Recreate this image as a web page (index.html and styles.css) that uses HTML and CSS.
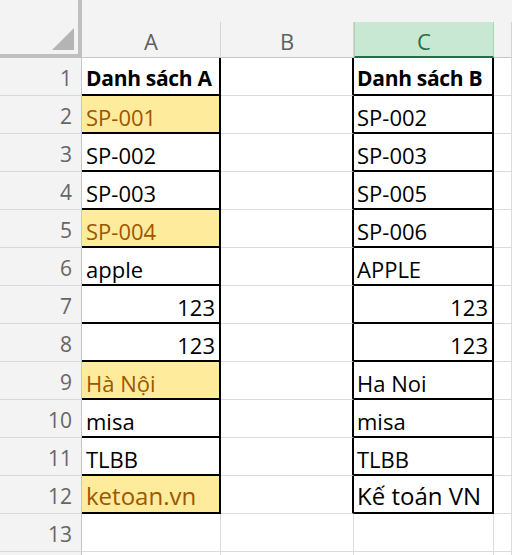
FILE: index.html
```html
<!DOCTYPE html>
<html lang="vi">
<head>
<meta charset="utf-8">
<title>Sheet</title>
<link rel="stylesheet" href="styles.css">
</head>
<body>
<div class="sheet">
  <div class="corner">
    <svg width="82" height="58" viewBox="0 0 82 58">
      <rect x="0" y="0" width="82" height="58" fill="#f3f3f3"/>
      <rect x="78" y="0" width="4" height="58" fill="#bfbfbf"/>
      <rect x="0" y="54" width="82" height="4" fill="#bfbfbf"/>
      <polygon points="52,50 74,28 74,50" fill="#b4b4b4"/>
    </svg>
  </div>
  <div class="strip"></div>
  <div class="ch">A</div>
  <div class="ch">B</div>
  <div class="ch ch-sel">C</div>
  <div class="ch"></div>

  <div class="rh">1</div>
  <div class="c ca bold">Danh sách A</div>
  <div class="c cb"></div>
  <div class="c cc bold">Danh sách B</div>
  <div class="c"></div>

  <div class="rh">2</div>
  <div class="c ca hl">SP-001</div>
  <div class="c cb"></div>
  <div class="c cc">SP-002</div>
  <div class="c"></div>

  <div class="rh">3</div>
  <div class="c ca">SP-002</div>
  <div class="c cb"></div>
  <div class="c cc">SP-003</div>
  <div class="c"></div>

  <div class="rh">4</div>
  <div class="c ca">SP-003</div>
  <div class="c cb"></div>
  <div class="c cc">SP-005</div>
  <div class="c"></div>

  <div class="rh">5</div>
  <div class="c ca hl">SP-004</div>
  <div class="c cb"></div>
  <div class="c cc">SP-006</div>
  <div class="c"></div>

  <div class="rh">6</div>
  <div class="c ca">apple</div>
  <div class="c cb"></div>
  <div class="c cc">APPLE</div>
  <div class="c"></div>

  <div class="rh">7</div>
  <div class="c ca num">123</div>
  <div class="c cb"></div>
  <div class="c cc num">123</div>
  <div class="c"></div>

  <div class="rh">8</div>
  <div class="c ca num">123</div>
  <div class="c cb"></div>
  <div class="c cc num">123</div>
  <div class="c"></div>

  <div class="rh">9</div>
  <div class="c ca hl">Hà Nội</div>
  <div class="c cb"></div>
  <div class="c cc">Ha Noi</div>
  <div class="c"></div>

  <div class="rh">10</div>
  <div class="c ca">misa</div>
  <div class="c cb"></div>
  <div class="c cc">misa</div>
  <div class="c"></div>

  <div class="rh">11</div>
  <div class="c ca">TLBB</div>
  <div class="c cb"></div>
  <div class="c cc">TLBB</div>
  <div class="c"></div>

  <div class="rh">12</div>
  <div class="c ca hl big">ketoan.vn</div>
  <div class="c cb"></div>
  <div class="c cc big">Kế toán VN</div>
  <div class="c"></div>

  <div class="rh">13</div>
  <div class="c"></div>
  <div class="c"></div>
  <div class="c"></div>
  <div class="c"></div>

  <div class="rh"></div>
  <div class="c"></div>
  <div class="c"></div>
  <div class="c"></div>
  <div class="c"></div>
</div>
</body>
</html>
```

FILE: styles.css
```css
html, body {
  margin: 0;
  padding: 0;
  background: #ffffff;
  overflow: hidden;
}

.sheet {
  display: grid;
  grid-template-columns: 82px 139px 133px 140px 18px;
  grid-template-rows: 22px 36px repeat(14, 38px);
  width: 512px;
  height: 555px;
  overflow: hidden;
  font-family: "Open Sans", "Noto Sans", sans-serif;
}

.sheet > div {
  box-sizing: border-box;
  min-width: 0;
}

.corner {
  grid-row: 1 / 3;
  grid-column: 1;
  line-height: 0;
}

.corner svg {
  display: block;
}

.strip {
  grid-row: 1;
  grid-column: 2 / 6;
  background: #f3f3f3;
}

.ch {
  background: #f3f3f3;
  border-right: 1px solid #d4d4d4;
  border-bottom: 1px solid #c6c6c6;
  color: #5f5f5f;
  font-size: 22px;
  line-height: 22px;
  display: flex;
  align-items: flex-end;
  justify-content: center;
  padding-bottom: 5px;
}

.ch-sel {
  background: #c8e8d4;
  border-left: 1px solid #a6d6b8;
  border-right: 1px solid #a6d6b8;
  border-bottom: 2px solid #1e7145;
  color: #1e7145;
  padding-bottom: 4px;
}

.rh {
  background: #f3f3f3;
  border-right: 1px solid #c6c6c6;
  border-bottom: 1px solid #d8d8d8;
  color: #666666;
  font-size: 21px;
  line-height: 21px;
  display: flex;
  align-items: flex-end;
  justify-content: flex-end;
  padding: 0 9px 6px 0;
}

.c {
  border-right: 1px solid #dcdcdc;
  border-bottom: 1px solid #dcdcdc;
  color: #000000;
  font-size: 22px;
  line-height: 22px;
  display: flex;
  align-items: flex-end;
  white-space: nowrap;
  padding: 0 4px 4px 4px;
}

.ca {
  border-right: 2px solid #000000;
  border-bottom: 2px solid #000000;
}

.cb {
  border-right: 2px solid #000000;
}

.cc {
  border-right: 2px solid #000000;
  border-bottom: 2px solid #000000;
  padding-left: 3px;
}

.num {
  justify-content: flex-end;
}

.hl {
  background: #ffeb9c;
  color: #9c5700;
}

.bold {
  font-weight: 700;
  font-size: 21px;
  line-height: 22px;
  letter-spacing: -0.3px;
  padding-bottom: 5px;
}

.big {
  font-size: 24px;
  line-height: 24px;
}
```
